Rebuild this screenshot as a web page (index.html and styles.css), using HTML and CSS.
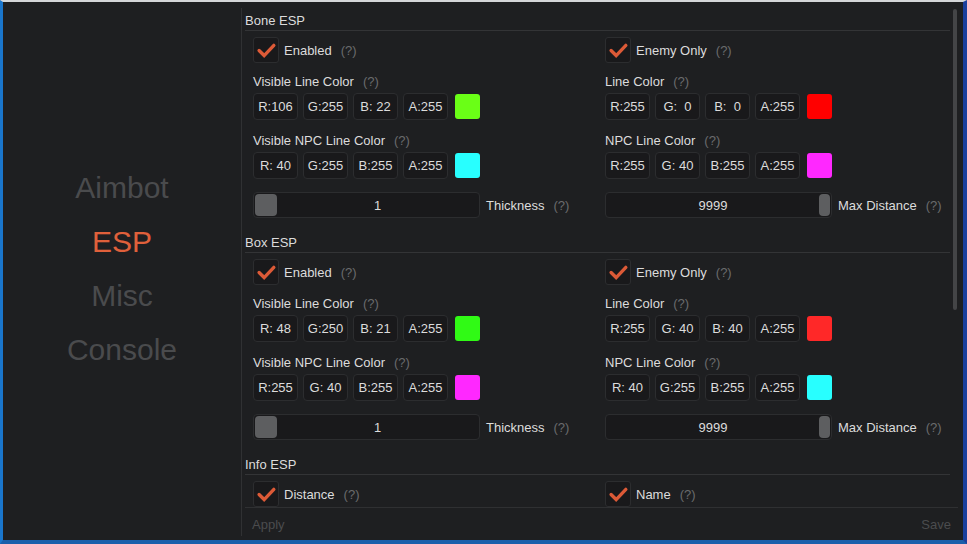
FILE: index.html
```html
<!DOCTYPE html>
<html>
<head>
    <meta charset="UTF-8">
    <link rel="stylesheet" href="styles.css">
</head>
<body>
    <div class="screen">
        <div class="sidebar">
            <div class="nav-item">Aimbot</div>
            <div class="nav-item active">ESP</div>
            <div class="nav-item">Misc</div>
            <div class="nav-item">Console</div>
        </div>

        <div class="main">
            <div class="scroll">
                <div class="content">

                    <!-- Bone ESP -->
                    <div class="section-title">Bone ESP</div>
                    <div class="section-body">
                        <div class="col">
                            <div class="check-row">
                                <div class="checkbox"><svg viewBox="0 0 26 26"><polyline points="5.5,13.5 11,19 21.5,8"/></svg></div>
                                <span class="label">Enabled</span><span class="help">(?)</span>
                            </div>
                            <div class="field first">
                                <div class="field-label">Visible Line Color<span class="help">(?)</span></div>
                                <div class="rgba">
                                    <div class="num">R:106</div><div class="num">G:255</div><div class="num">B: 22</div><div class="num">A:255</div>
                                    <div class="swatch green"></div>
                                </div>
                            </div>
                            <div class="field">
                                <div class="field-label">Visible NPC Line Color<span class="help">(?)</span></div>
                                <div class="rgba">
                                    <div class="num">R: 40</div><div class="num">G:255</div><div class="num">B:255</div><div class="num">A:255</div>
                                    <div class="swatch cyan"></div>
                                </div>
                            </div>
                            <div class="slider-row">
                                <div class="slider"><div class="grab"></div><span class="slider-value">1</span></div>
                                <span class="label">Thickness</span><span class="help">(?)</span>
                            </div>
                        </div>
                        <div class="col">
                            <div class="check-row">
                                <div class="checkbox"><svg viewBox="0 0 26 26"><polyline points="5.5,13.5 11,19 21.5,8"/></svg></div>
                                <span class="label">Enemy Only</span><span class="help">(?)</span>
                            </div>
                            <div class="field first">
                                <div class="field-label">Line Color<span class="help">(?)</span></div>
                                <div class="rgba">
                                    <div class="num">R:255</div><div class="num">G:  0</div><div class="num">B:  0</div><div class="num">A:255</div>
                                    <div class="swatch red"></div>
                                </div>
                            </div>
                            <div class="field">
                                <div class="field-label">NPC Line Color<span class="help">(?)</span></div>
                                <div class="rgba">
                                    <div class="num">R:255</div><div class="num">G: 40</div><div class="num">B:255</div><div class="num">A:255</div>
                                    <div class="swatch magenta"></div>
                                </div>
                            </div>
                            <div class="slider-row">
                                <div class="slider"><span class="slider-value">9999</span><div class="grab end"></div></div>
                                <span class="label">Max Distance</span><span class="help">(?)</span>
                            </div>
                        </div>
                    </div>

                    <!-- Box ESP -->
                    <div class="section-title">Box ESP</div>
                    <div class="section-body">
                        <div class="col">
                            <div class="check-row">
                                <div class="checkbox"><svg viewBox="0 0 26 26"><polyline points="5.5,13.5 11,19 21.5,8"/></svg></div>
                                <span class="label">Enabled</span><span class="help">(?)</span>
                            </div>
                            <div class="field first">
                                <div class="field-label">Visible Line Color<span class="help">(?)</span></div>
                                <div class="rgba">
                                    <div class="num">R: 48</div><div class="num">G:250</div><div class="num">B: 21</div><div class="num">A:255</div>
                                    <div class="swatch lime"></div>
                                </div>
                            </div>
                            <div class="field">
                                <div class="field-label">Visible NPC Line Color<span class="help">(?)</span></div>
                                <div class="rgba">
                                    <div class="num">R:255</div><div class="num">G: 40</div><div class="num">B:255</div><div class="num">A:255</div>
                                    <div class="swatch magenta"></div>
                                </div>
                            </div>
                            <div class="slider-row">
                                <div class="slider"><div class="grab"></div><span class="slider-value">1</span></div>
                                <span class="label">Thickness</span><span class="help">(?)</span>
                            </div>
                        </div>
                        <div class="col">
                            <div class="check-row">
                                <div class="checkbox"><svg viewBox="0 0 26 26"><polyline points="5.5,13.5 11,19 21.5,8"/></svg></div>
                                <span class="label">Enemy Only</span><span class="help">(?)</span>
                            </div>
                            <div class="field first">
                                <div class="field-label">Line Color<span class="help">(?)</span></div>
                                <div class="rgba">
                                    <div class="num">R:255</div><div class="num">G: 40</div><div class="num">B: 40</div><div class="num">A:255</div>
                                    <div class="swatch coral"></div>
                                </div>
                            </div>
                            <div class="field">
                                <div class="field-label">NPC Line Color<span class="help">(?)</span></div>
                                <div class="rgba">
                                    <div class="num">R: 40</div><div class="num">G:255</div><div class="num">B:255</div><div class="num">A:255</div>
                                    <div class="swatch cyan"></div>
                                </div>
                            </div>
                            <div class="slider-row">
                                <div class="slider"><span class="slider-value">9999</span><div class="grab end"></div></div>
                                <span class="label">Max Distance</span><span class="help">(?)</span>
                            </div>
                        </div>
                    </div>

                    <!-- Info ESP -->
                    <div class="section-title">Info ESP</div>
                    <div class="section-body">
                        <div class="col">
                            <div class="check-row">
                                <div class="checkbox"><svg viewBox="0 0 26 26"><polyline points="5.5,13.5 11,19 21.5,8"/></svg></div>
                                <span class="label">Distance</span><span class="help">(?)</span>
                            </div>
                        </div>
                        <div class="col">
                            <div class="check-row">
                                <div class="checkbox"><svg viewBox="0 0 26 26"><polyline points="5.5,13.5 11,19 21.5,8"/></svg></div>
                                <span class="label">Name</span><span class="help">(?)</span>
                            </div>
                        </div>
                    </div>

                </div>
                <div class="scrollbar"><div class="thumb"></div></div>
            </div>

            <div class="footer">
                <span class="footer-btn">Apply</span>
                <span class="footer-btn">Save</span>
            </div>
        </div>
    </div>
</body>
</html>
```

FILE: styles.css
```css
body {
    margin: 0;
    background: #1c52a8;
    font-family: "Liberation Sans", Arial, sans-serif;
}
.screen {
    height: 544px;
    box-sizing: border-box;
    border-top: 2px solid #d4d6d8;
    border-left: 3px solid #1a76cc;
    border-right: 4px solid #1b3f9c;
    border-bottom: 4px solid #1b5fab;
    background: #1e1f21;
    display: flex;
    overflow: hidden;
}

/* left navigation */
.sidebar {
    width: 239px;
    margin-top: 6px;
    margin-bottom: 4px;
    border-right: 1px solid #303133;
    display: flex;
    flex-direction: column;
    align-items: center;
    justify-content: center;
    padding-bottom: 6px;
    box-sizing: border-box;
}
.nav-item {
    font-size: 30px;
    line-height: 54px;
    color: #4a4b4d;
}
.nav-item.active {
    color: #e0603b;
}

/* right panel */
.main {
    flex: 1;
    display: flex;
    flex-direction: column;
    padding-top: 6px;
    min-width: 0;
}
.scroll {
    flex: 1;
    display: flex;
    overflow: hidden;
}
.content {
    flex: 1;
    padding: 5px 0 0 3px;
    overflow: hidden;
}
.scrollbar {
    width: 13px;
}
.thumb {
    width: 4px;
    height: 301px;
    margin: 1px 0 0 3px;
    background: #444547;
    border-radius: 2px;
}

.section-title {
    font-size: 13px;
    line-height: 16px;
    color: #dcdcdc;
    padding-bottom: 1px;
    border-bottom: 1px solid #333436;
    margin-top: 17px;
}
.section-title:first-child {
    margin-top: 0;
}
.section-body {
    display: grid;
    grid-template-columns: 352px 1fr;
    padding: 6px 0 0 8px;
}
.col {
    display: flex;
    flex-direction: column;
}

.label, .field-label, .slider-value, .num {
    font-size: 13px;
    color: #dcdcdc;
}
.help {
    font-size: 13px;
    color: #6a6b6d;
    margin-left: 9px;
}

.check-row {
    display: flex;
    align-items: center;
    height: 26px;
}
.checkbox {
    width: 26px;
    height: 26px;
    box-sizing: border-box;
    background: #19191b;
    border: 1px solid #2c2d2f;
    border-radius: 3px;
    margin-right: 5px;
}
.checkbox svg {
    display: block;
    width: 24px;
    height: 24px;
}
.checkbox polyline {
    fill: none;
    stroke: #dc5a37;
    stroke-width: 3.6;
    stroke-linecap: round;
    stroke-linejoin: miter;
}

.field {
    margin-top: 13px;
}
.field.first {
    margin-top: 11px;
}
.field-label {
    line-height: 16px;
}
.rgba {
    display: flex;
    align-items: center;
    gap: 5px;
    margin-top: 3px;
}
.num {
    width: 45px;
    height: 27px;
    box-sizing: border-box;
    line-height: 25px;
    text-align: center;
    white-space: pre;
    background: #19191b;
    border: 1px solid #2c2d2f;
    border-radius: 4px;
}
.swatch {
    width: 25px;
    height: 25px;
    margin-left: 2px;
    border-radius: 3px;
}
.green { background: #6aff16; }
.lime { background: #30fa15; }
.cyan { background: #28ffff; }
.magenta { background: #ff28ff; }
.red { background: #ff0000; }
.coral { background: #ff2828; }

.slider-row {
    display: flex;
    align-items: center;
    margin-top: 13px;
}
.slider {
    width: 227px;
    height: 26px;
    box-sizing: border-box;
    background: #19191b;
    border: 1px solid #2c2d2f;
    border-radius: 4px;
    display: flex;
    align-items: center;
    padding: 0 1px;
    margin-right: 6px;
}
.slider-value {
    flex: 1;
    text-align: center;
}
.grab {
    width: 22px;
    height: 22px;
    background: #5d5e60;
    border-radius: 4px;
}
.grab.end {
    width: 11px;
}

.footer {
    height: 33px;
    box-sizing: border-box;
    margin: 0 5px 0 3px;
    border-top: 1px solid #2f3032;
    display: flex;
    justify-content: space-between;
    align-items: center;
    padding: 0 7px;
}
.footer-btn {
    font-size: 13px;
    color: #4b4c4e;
}
```
